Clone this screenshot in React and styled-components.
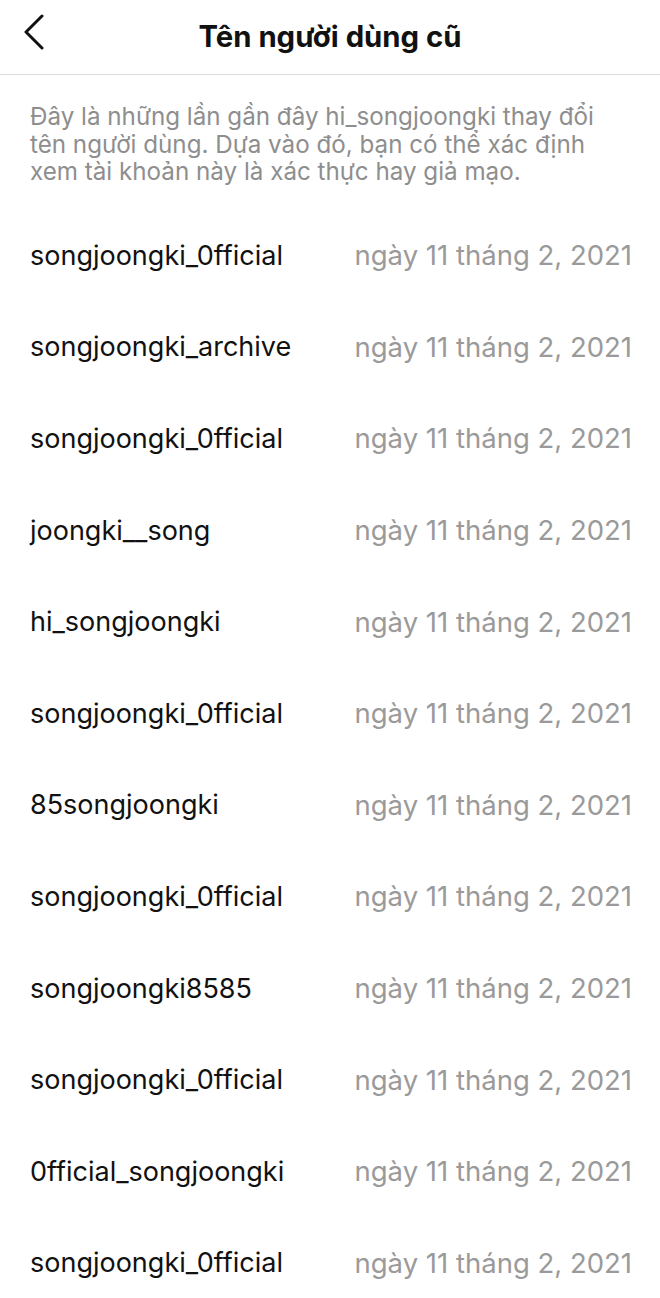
import React from 'react';
import styled, { createGlobalStyle } from 'styled-components';

const GlobalStyle = createGlobalStyle`
  body {
    margin: 0;
    background: #fff;
    font-family: Inter, "Noto Sans", "Liberation Sans", sans-serif;
    -webkit-font-smoothing: antialiased;
  }
`;

const Page = styled.div`
  width: 660px;
  min-height: 1298px;
  background: #fff;
  overflow: hidden;
`;

const Header = styled.div`
  height: 74px;
  display: flex;
  align-items: center;
  justify-content: center;
  position: relative;
  border-bottom: 1px solid #dcdcdc;
`;

const BackButton = styled.button`
  position: absolute;
  left: 16px;
  top: 12px;
  width: 36px;
  height: 40px;
  border: none;
  background: none;
  padding: 0;
  display: flex;
  align-items: center;
  justify-content: center;
  color: #111;
`;

const Title = styled.h1`
  margin: 0;
  margin-top: -2px;
  font-size: 29.3px;
  font-weight: 700;
  color: #111;
  letter-spacing: 0;
`;

const Intro = styled.p`
  margin: 0;
  padding: 28px 24px 0 30px;
  font-size: 24.2px;
  line-height: 27.5px;
  color: #8e8e8e;
`;

const List = styled.div`
  display: flex;
  flex-direction: column;
  padding-top: 24px;
`;

const Row = styled.div`
  height: 91.6px;
  display: flex;
  align-items: center;
  justify-content: space-between;
  padding: 0 28px 0 30px;
`;

const Name = styled.span`
  font-size: 27px;
  color: #111;
`;

const When = styled.span`
  font-size: 27.5px;
  color: ${p => p.muted ? '#9a9a9a' : '#111'};
`;

const names = [
  'songjoongki_0fficial',
  'songjoongki_archive',
  'songjoongki_0fficial',
  'joongki__song',
  'hi_songjoongki',
  'songjoongki_0fficial',
  '85songjoongki',
  'songjoongki_0fficial',
  'songjoongki8585',
  'songjoongki_0fficial',
  '0fficial_songjoongki',
  'songjoongki_0fficial',
];

const ChevronLeft = () => (
  <svg width="22" height="36" viewBox="0 0 22 36" fill="none">
    <path d="M19 2 L3 18 L19 34" stroke="currentColor" strokeWidth="3" strokeLinecap="round" strokeLinejoin="round" />
  </svg>
);

export default function App() {
  return (
    <Page>
      <GlobalStyle />
      <Header>
        <BackButton aria-label="Quay lại">
          <ChevronLeft />
        </BackButton>
        <Title>Tên người dùng cũ</Title>
      </Header>
      <Intro>
        Đây là những lần gần đây hi_songjoongki thay đổi tên người dùng. Dựa vào đó, bạn có thể xác định xem tài khoản này là xác thực hay giả mạo.
      </Intro>
      <List>
        {names.map((n, i) => (
          <Row key={i}>
            <Name>{n}</Name>
            <When muted>ngày 11 tháng 2, 2021</When>
          </Row>
        ))}
      </List>
    </Page>
  );
}
